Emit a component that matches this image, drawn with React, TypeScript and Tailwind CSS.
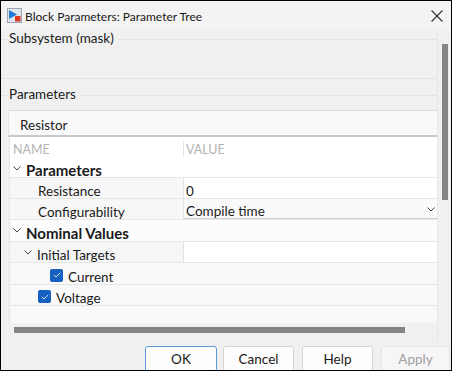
import React from "react";

const Chevron = ({ className = "" }: { className?: string }) => (
  <svg width="8" height="5" viewBox="0 0 8 5" className={className}>
    <polyline points="0.5,0.5 4,4 7.5,0.5" fill="none" stroke="#444" strokeWidth="1" />
  </svg>
);

const Check = () => (
  <span className="mt-[3px] flex h-[13px] w-[13px] items-center justify-center rounded-[2px] bg-[#1660c0]">
    <svg width="8" height="6" viewBox="0 0 8 6">
      <polyline points="0.8,3 3,5 7.2,0.8" fill="none" stroke="#cfe0f5" strokeWidth="1" />
    </svg>
  </span>
);

export default function App() {
  return (
    <div
      className="flex h-[371px] w-[452px] flex-col overflow-hidden border border-black bg-[#f0f0f0] text-[13px] text-[#1a1a1a]"
      style={{ fontFamily: 'Lato, "Noto Sans", sans-serif' }}
    >
      {/* title bar */}
      <div className="flex h-[29px] shrink-0 items-center bg-[#f3f3f3] pl-[6px] pr-[8px]">
        <svg width="15" height="15" viewBox="0 0 15 15" className="mr-[3px]">
          <rect x="0.5" y="0.5" width="14" height="14" fill="#dde6ee" stroke="#9aa7b3" />
          <polygon points="2,2 10,6.5 2,11" fill="#1f7ad6" />
          <rect x="8" y="8" width="5.5" height="5.5" fill="#e0391e" />
        </svg>
        <span className="pt-[2px] text-[12px] leading-none">Block Parameters: Parameter Tree</span>
        <div className="flex-1" />
        <svg width="12" height="12" viewBox="0 0 12 12">
          <line x1="0.5" y1="0.5" x2="11.5" y2="11.5" stroke="#333" strokeWidth="1.1" />
          <line x1="11.5" y1="0.5" x2="0.5" y2="11.5" stroke="#333" strokeWidth="1.1" />
        </svg>
      </div>

      {/* middle */}
      <div className="flex h-[313px] shrink-0">
        <div className="flex w-[436px] flex-col">
          {/* Subsystem groupbox */}
          <div className="mt-[2px] flex h-[14px] items-center">
            <div className="h-px w-[7px] bg-[#e2e2e2]" />
            <span className="px-[1px] text-[13.5px] leading-none">Subsystem (mask)</span>
            <div className="ml-[3px] h-px flex-1 bg-[#e2e2e2]" />
          </div>
          <div className="mt-[32px] h-px bg-[#e2e2e2]" />
          {/* Parameters groupbox */}
          <div className="mt-[9px] flex h-[14px] items-center">
            <div className="h-px w-[7px] bg-[#e2e2e2]" />
            <span className="px-[1px] text-[13.5px] leading-none">Parameters</span>
            <div className="ml-[3px] h-px flex-1 bg-[#e2e2e2]" />
          </div>
          {/* Resistor box */}
          <div className="ml-[7px] mt-[8px] flex h-[27px] items-center border-t border-b-2 border-t-[#dcdcdc] border-b-[#c8c8c8] border-l border-l-[#e4e4e4] bg-[#f9f9f9] pl-[11px] text-[13.5px]">
            <span className="pt-[5px]">Resistor</span>
          </div>
          {/* table */}
          <div className="ml-[8px] flex h-[186px] flex-col border-l border-[#e6e6e6] bg-white text-[13.5px]">
            {/* header */}
            <div className="flex h-[23px] shrink-0 items-center text-[#b4b4b4]">
              <div className="w-[173px] pl-[3px] pt-[3px] text-[12.5px]">NAME</div>
              <div className="h-[16px] w-px bg-[#e2e2e2]" />
              <div className="pl-[2px] pt-[3px] text-[12.5px]">VALUE</div>
            </div>
            {/* Parameters section */}
            <div className="flex h-[18px] shrink-0 items-center border-b border-[#e6e6e6]">
              <Chevron className="ml-[3px] mr-[5px]" />
              <span className="pt-[4px] text-[15px] font-bold leading-none">Parameters</span>
            </div>
            <div className="flex h-[21px] shrink-0 border-b border-[#e6e6e6]">
              <div className="flex w-[173px] items-center bg-[#f7f7f7] pl-[28px] pt-[6px]">Resistance</div>
              <div className="w-px bg-[#e2e2e2]" />
              <div className="flex flex-1 items-center pl-[2px] pt-[6px]">0</div>
            </div>
            <div className="flex h-[21px] shrink-0 border-b border-[#e6e6e6]">
              <div className="flex w-[173px] items-center bg-[#f7f7f7] pl-[28px] pt-[6px]">Configurability</div>
              <div className="w-px bg-[#e2e2e2]" />
              <div className="flex flex-1 items-center border-b border-[#d0d0d0] bg-[#fafafa] pl-[2px] pr-[2px]">
                <span className="flex-1 pt-[6px]">Compile time</span>
                <Chevron className="mt-[2px]" />
              </div>
            </div>
            {/* Nominal Values */}
            <div className="flex h-[22px] shrink-0 items-center border-b border-[#e6e6e6] bg-[#fcfcfc]">
              <Chevron className="ml-[3px] mr-[5px]" />
              <span className="pt-[5px] text-[15px] font-bold leading-none">Nominal Values</span>
            </div>
            <div className="flex h-[21px] shrink-0 border-b border-[#e6e6e6]">
              <div className="flex w-[173px] items-center bg-[#f6f6f6] pl-[14px]">
                <Chevron className="mr-[5px]" />
                <span className="pt-[6px]">Initial Targets</span>
              </div>
              <div className="w-px bg-[#e2e2e2]" />
              <div className="flex-1 bg-white" />
            </div>
            <div className="flex h-[22px] shrink-0 items-center border-b border-[#e6e6e6] bg-[#f9f9f9] pl-[40px]">
              <Check />
              <span className="ml-[5px] pt-[7px]">Current</span>
            </div>
            <div className="flex h-[21px] shrink-0 items-center border-b border-[#e6e6e6] bg-[#f9f9f9] pl-[28px]">
              <Check />
              <span className="ml-[5px] pt-[7px]">Voltage</span>
            </div>
            <div className="flex-1 bg-[#f9f9f9]" />
          </div>
          {/* horizontal scrollbar */}
          <div className="ml-[13px] mt-[4px] h-[6px] w-[391px] bg-[#858585]" />
        </div>
        {/* vertical scrollbar */}
        <div className="flex w-[14px] justify-center border-l border-[#e8e8e8] pt-[14px]">
          <div className="h-[156px] w-[6px] bg-[#858585]" />
        </div>
      </div>

      {/* buttons */}
      <div className="flex flex-1 items-start pl-[144px] pt-[3px]">
        <button className="h-[26px] w-[72px] rounded-[3px] border border-[#5b9ad8] bg-[#fdfdfd] pt-[1px] text-[13.5px]">OK</button>
        <button className="ml-[6px] h-[26px] w-[71px] rounded-[3px] border border-[#d4d4d4] bg-[#fdfdfd] pt-[1px] text-[13.5px]">Cancel</button>
        <button className="ml-[8px] h-[26px] w-[71px] rounded-[3px] border border-[#d4d4d4] bg-[#fdfdfd] pt-[1px] text-[13.5px]">Help</button>
        <button className="ml-[8px] h-[26px] w-[69px] rounded-[3px] border border-[#e4e4e4] bg-[#f6f6f6] pt-[1px] text-[13.5px] text-[#a0a0a0]">Apply</button>
      </div>
    </div>
  );
}
